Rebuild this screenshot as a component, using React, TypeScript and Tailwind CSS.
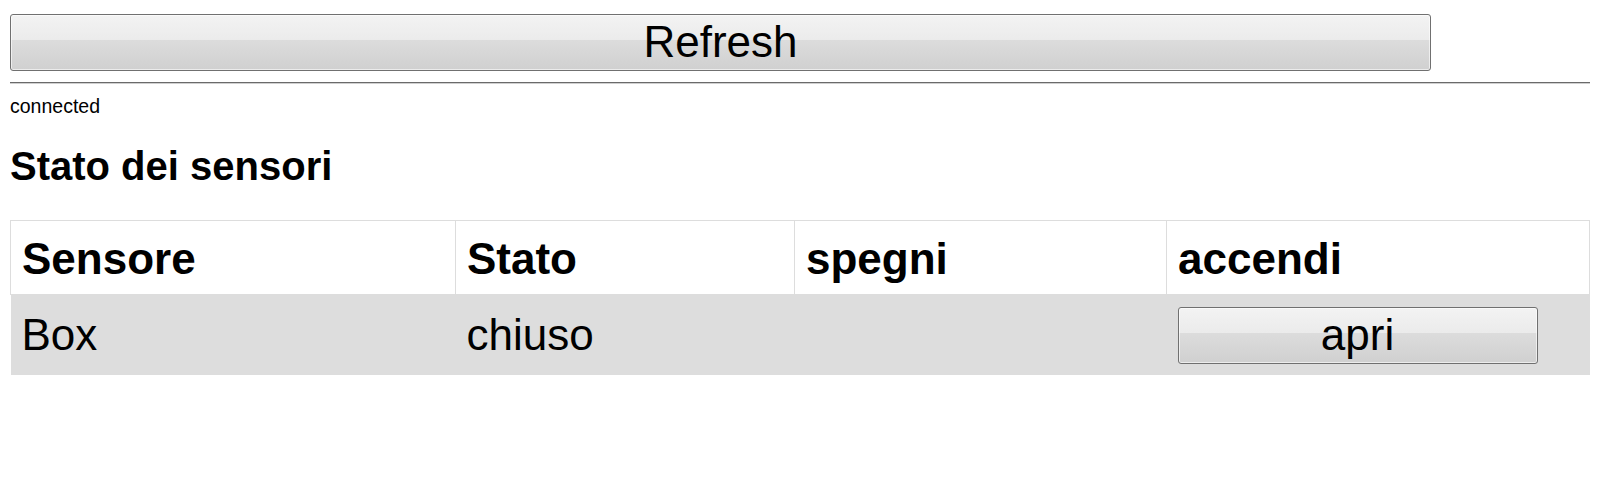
export default function App() {
  const btn =
    "h-[57px] border border-[#707070] rounded-[3px] bg-[linear-gradient(to_bottom,#f3f3f3_0%,#ebebeb_45%,#dcdcdc_46%,#d0d0d0_100%)] shadow-[inset_0_0_0_1px_rgba(255,255,255,0.6)] text-[44px] leading-[1.15] text-black";

  return (
    <div className="min-h-[480px] bg-white p-[10px] text-black font-['Liberation_Sans',Arial,sans-serif]">
      {/* Refresh */}
      <button className={`${btn} mt-[4px] block w-[1421px]`}>Refresh</button>

      <div className="mt-[11px] h-[2px] border-t border-[#6a6a6a] border-b border-b-[#cfcfcf]" />

      <div className="mt-[11px] text-[19.5px] leading-[1.15]">connected</div>

      <h2 className="mt-[26px] text-[40px] font-bold leading-[1.15]">Stato dei sensori</h2>

      {/* Sensor table */}
      <table className="mt-[31px] w-full table-fixed border-collapse">
        <colgroup>
          <col className="w-[445px]" />
          <col className="w-[339px]" />
          <col className="w-[372px]" />
          <col />
        </colgroup>
        <thead>
          <tr className="h-[74px] bg-white">
            {["Sensore", "Stato", "spegni", "accendi"].map((h) => (
              <th
                key={h}
                className="border border-[#dddddd] px-[11px] pt-[2px] text-left align-middle text-[44px] font-bold leading-[1.15]"
              >
                {h}
              </th>
            ))}
          </tr>
        </thead>
        <tbody>
          <tr className="h-[80px] bg-[#dddddd]">
            <td className="px-[11px] text-[44px] leading-[1.15] align-middle">Box</td>
            <td className="px-[11px] text-[44px] leading-[1.15] align-middle">chiuso</td>
            <td className="px-[11px]" />
            <td className="px-[11px] align-middle">
              <button className={`${btn} block w-[360px]`}>apri</button>
            </td>
          </tr>
        </tbody>
      </table>
    </div>
  );
}
